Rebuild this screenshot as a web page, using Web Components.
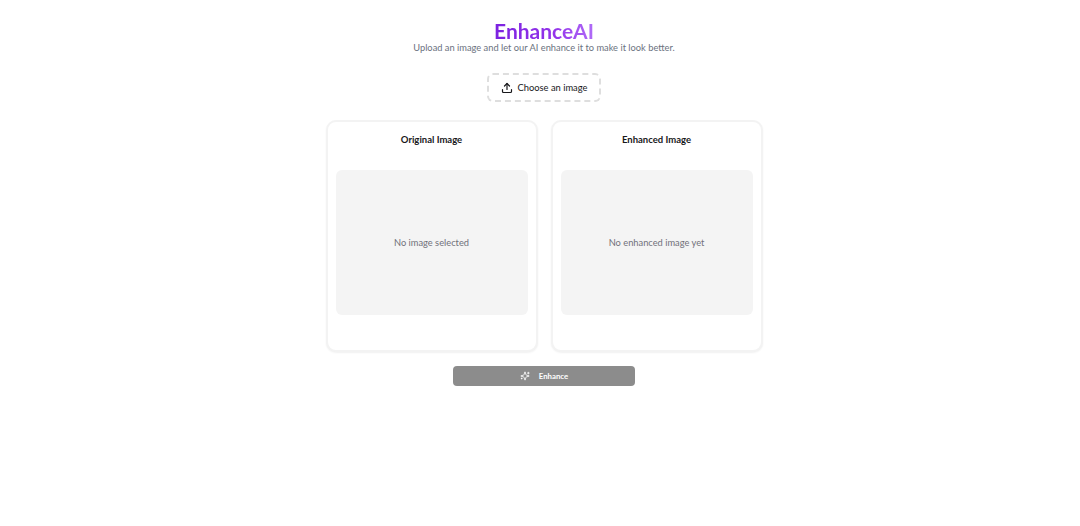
<!DOCTYPE html>
<html>
<head>
<meta charset="utf-8">
<title>EnhanceAI</title>
<style>
    html, body { margin: 0; background: #fff; overflow: hidden; }
    body { font-family: Lato, "Noto Sans", sans-serif; }
</style>
</head>
<body>
<enhance-app></enhance-app>
<script>
class EnhanceHeader extends HTMLElement {
    constructor() {
        super();
        this.attachShadow({ mode: "open" }).innerHTML = `
            <style>
                :host { display: block; text-align: center; }
                h1 {
                    margin: 0;
                    font-size: 21px;
                    line-height: 26px;
                    font-weight: 700;
                    color: transparent;
                    background: linear-gradient(90deg, #7c22e0 0%, #9333ea 60%, #b06cf7 100%);
                    -webkit-background-clip: text;
                    background-clip: text;
                    display: inline-block;
                }
                p { margin: -3px 0 0; font-size: 9.3px; line-height: 14px; color: #6b7280; }
            </style>
            <h1>EnhanceAI</h1>
            <p>Upload an image and let our AI enhance it to make it look better.</p>
        `;
    }
}

class UploadButton extends HTMLElement {
    constructor() {
        super();
        this.attachShadow({ mode: "open" }).innerHTML = `
            <style>
                :host {
                    display: flex;
                    align-items: center;
                    justify-content: center;
                    gap: 5px;
                    width: 114px;
                    height: 29px;
                    box-sizing: border-box;
                    border: 2px dashed #dedede;
                    border-radius: 6px;
                    font-size: 9.35px;
                    color: #18181b;
                    cursor: pointer;
                }
                svg { width: 12px; height: 12px; }
            </style>
            <svg viewBox="0 0 24 24" fill="none" stroke="currentColor" stroke-width="2.4" stroke-linecap="round" stroke-linejoin="round">
                <path d="M21 15v4a2 2 0 0 1-2 2H5a2 2 0 0 1-2-2v-4"/>
                <path d="M17 8l-5-5-5 5"/>
                <path d="M12 3v12"/>
            </svg>
            <span><slot></slot></span>
        `;
    }
}

class ImagePanel extends HTMLElement {
    constructor() {
        super();
        this.attachShadow({ mode: "open" }).innerHTML = `
            <style>
                :host {
                    display: flex;
                    flex-direction: column;
                    width: 212px;
                    height: 232px;
                    box-sizing: border-box;
                    padding: 11px 8px 35px;
                    border: 2px solid #f3f3f3;
                    border-radius: 10px;
                    box-shadow: 0 1px 2px rgba(0,0,0,0.06);
                    background: #fff;
                }
                h2 {
                    margin: 0 0 24px;
                    font-size: 9.5px;
                    line-height: 13px;
                    font-weight: 700;
                    color: #18181b;
                    text-align: center;
                }
                .box {
                    flex: 1;
                    display: flex;
                    align-items: center;
                    justify-content: center;
                    background: #f4f4f4;
                    border-radius: 6px;
                    font-size: 9.3px;
                    color: #71717a;
                }
            </style>
            <h2></h2>
            <div class="box"><slot></slot></div>
        `;
    }

    connectedCallback() {
        this.shadowRoot.querySelector("h2").textContent = this.getAttribute("heading");
    }
}

class EnhanceButton extends HTMLElement {
    constructor() {
        super();
        this.attachShadow({ mode: "open" }).innerHTML = `
            <style>
                :host {
                    display: flex;
                    align-items: center;
                    justify-content: center;
                    gap: 9px;
                    width: 182px;
                    height: 20px;
                    border-radius: 4px;
                    background: #8c8c8c;
                    color: #fff;
                    font-size: 7.8px;
                    font-weight: 700;
                }
                svg { width: 10px; height: 10px; }
            </style>
            <svg viewBox="0 0 24 24" fill="none" stroke="currentColor" stroke-width="2" stroke-linecap="round" stroke-linejoin="round">
                <path d="M9.937 15.5A2 2 0 0 0 8.5 14.063l-6.135-1.582a.5.5 0 0 1 0-.962L8.5 9.936A2 2 0 0 0 9.937 8.5l1.582-6.135a.5.5 0 0 1 .963 0L14.063 8.5A2 2 0 0 0 15.5 9.937l6.135 1.581a.5.5 0 0 1 0 .964L15.5 14.063a2 2 0 0 0-1.437 1.437l-1.582 6.135a.5.5 0 0 1-.963 0z"/>
                <path d="M20 3v4"/>
                <path d="M22 5h-4"/>
                <path d="M4 17v2"/>
                <path d="M5 18H3"/>
            </svg>
            <span><slot></slot></span>
        `;
    }
}

class EnhanceApp extends HTMLElement {
    constructor() {
        super();
        this.attachShadow({ mode: "open" }).innerHTML = `
            <style>
                :host {
                    display: flex;
                    flex-direction: column;
                    align-items: center;
                    width: 1088px;
                    padding-top: 18px;
                }
                .panels { display: flex; gap: 13px; margin: 18px 0 14px; }
                upload-button { margin-top: 18px; }
            </style>
            <enhance-header></enhance-header>
            <upload-button>Choose an image</upload-button>
            <div class="panels">
                <image-panel heading="Original Image">No image selected</image-panel>
                <image-panel heading="Enhanced Image">No enhanced image yet</image-panel>
            </div>
            <enhance-button>Enhance</enhance-button>
        `;
    }
}

customElements.define("enhance-header", EnhanceHeader);
customElements.define("upload-button", UploadButton);
customElements.define("image-panel", ImagePanel);
customElements.define("enhance-button", EnhanceButton);
customElements.define("enhance-app", EnhanceApp);
</script>
</body>
</html>
